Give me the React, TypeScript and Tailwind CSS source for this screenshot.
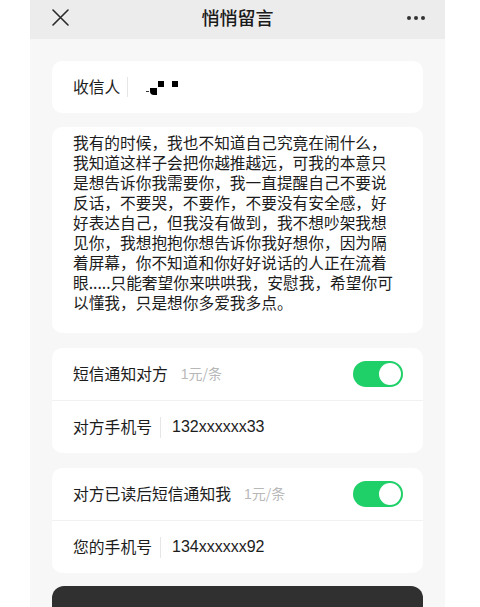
const message = [
  "我有的时候，我也不知道自己究竟在闹什么，",
  "我知道这样子会把你越推越远，可我的本意只",
  "是想告诉你我需要你，我一直提醒自己不要说",
  "反话，不要哭，不要作，不要没有安全感，好",
  "好表达自己，但我没有做到，我不想吵架我想",
  "见你，我想抱抱你想告诉你我好想你，因为隔",
  "着屏幕，你不知道和你好好说话的人正在流着",
  "眼.....只能奢望你来哄哄我，安慰我，希望你可",
  "以懂我，只是想你多爱我多点。",
];

const cjk = "font-['Noto_Sans_CJK_SC',sans-serif]";

function Toggle() {
  return (
    <div className="w-[50px] h-[26px] rounded-full bg-[#1fcf68] flex items-center justify-end pr-[2px]">
      <div className="w-[22px] h-[22px] rounded-full bg-white" />
    </div>
  );
}

function NotifyCard({ label, phoneLabel, phone }: { label: string; phoneLabel: string; phone: string }) {
  return (
    <div className="bg-white rounded-[10px]">
      <div className="h-[53px] flex items-center pl-[21px] pr-[20px] border-b border-[#f1f1f1]">
        <span className="text-[15.8px] text-[#1c1c1c]">{label}</span>
        <span className="ml-[13px] text-[14px] text-[#b8b8b8]">
          <span className="font-['Liberation_Sans',sans-serif]">1</span>元/条
        </span>
        <div className="ml-auto">
          <Toggle />
        </div>
      </div>
      <div className="h-[52px] flex items-center px-[21px]">
        <span className="text-[15.8px] text-[#1c1c1c]">{phoneLabel}</span>
        <div className="w-px h-[21px] bg-[#e6e6e6] ml-[8px] mr-[11px]" />
        <span className="font-['Liberation_Sans',sans-serif] text-[16px] text-[#1c1c1c]">{phone}</span>
      </div>
    </div>
  );
}

export default function App() {
  return (
    <div className={`w-[480px] h-[607px] bg-white overflow-hidden pl-[30px] ${cjk}`}>
      <div className="w-[415px] min-h-[607px] bg-[#f7f7f7]">
        {/* Header */}
        <div className="h-[39px] bg-[#ececec] grid grid-cols-[60px_1fr_60px] items-center pb-[4px]">
          <div className="pl-[22px]">
            <svg width="17" height="17" viewBox="0 0 17 17">
              <path d="M1 1 L16 16 M16 1 L1 16" stroke="#2a2a2a" strokeWidth="1.6" strokeLinecap="round" />
            </svg>
          </div>
          <div className="text-center text-[18px] font-medium text-[#1a1a1a]">悄悄留言</div>
          <div className="flex justify-end pr-[20px] gap-[3px]">
            <span className="w-[4px] h-[4px] rounded-full bg-[#333]" />
            <span className="w-[4px] h-[4px] rounded-full bg-[#333]" />
            <span className="w-[4px] h-[4px] rounded-full bg-[#333]" />
          </div>
        </div>

        <div className="px-[22px] pt-[22px] flex flex-col">
          {/* Recipient */}
          <div className="h-[52px] bg-white rounded-[10px] flex items-center px-[21px]">
            <span className="text-[15.8px] text-[#1c1c1c]">收信人</span>
            <div className="w-px h-[20px] bg-[#e6e6e6] ml-[7px]" />
            <div className="relative w-[40px] h-[20px] ml-[16px]">
              <span className="absolute left-[2px] top-[14px] w-[3px] h-px bg-[#333]" />
              <span className="absolute left-[6px] top-[11px] w-[7px] h-[7px] bg-black rounded-bl-[4px]" />
              <span className="absolute left-[14px] top-[4px] w-[6px] h-[6px] bg-black" />
              <span className="absolute left-[28px] top-[4px] w-[6px] h-[6px] bg-black" />
            </div>
          </div>

          {/* Message */}
          <div className="mt-[14px] bg-white rounded-[10px] pt-[6px] pb-[20px] px-[21px] text-[15.7px] leading-[20px] text-[#1c1c1c]">
            {message.map((line) => (
              <div key={line} className="whitespace-nowrap">
                {line}
              </div>
            ))}
          </div>

          <div className="mt-[15px]">
            <NotifyCard label="短信通知对方" phoneLabel="对方手机号" phone="132xxxxxx33" />
          </div>
          <div className="mt-[15px]">
            <NotifyCard label="对方已读后短信通知我" phoneLabel="您的手机号" phone="134xxxxxx92" />
          </div>

          {/* Send button */}
          <div className="mt-[13px] h-[56px] bg-[#303030] rounded-[12px]" />
        </div>
      </div>
    </div>
  );
}
